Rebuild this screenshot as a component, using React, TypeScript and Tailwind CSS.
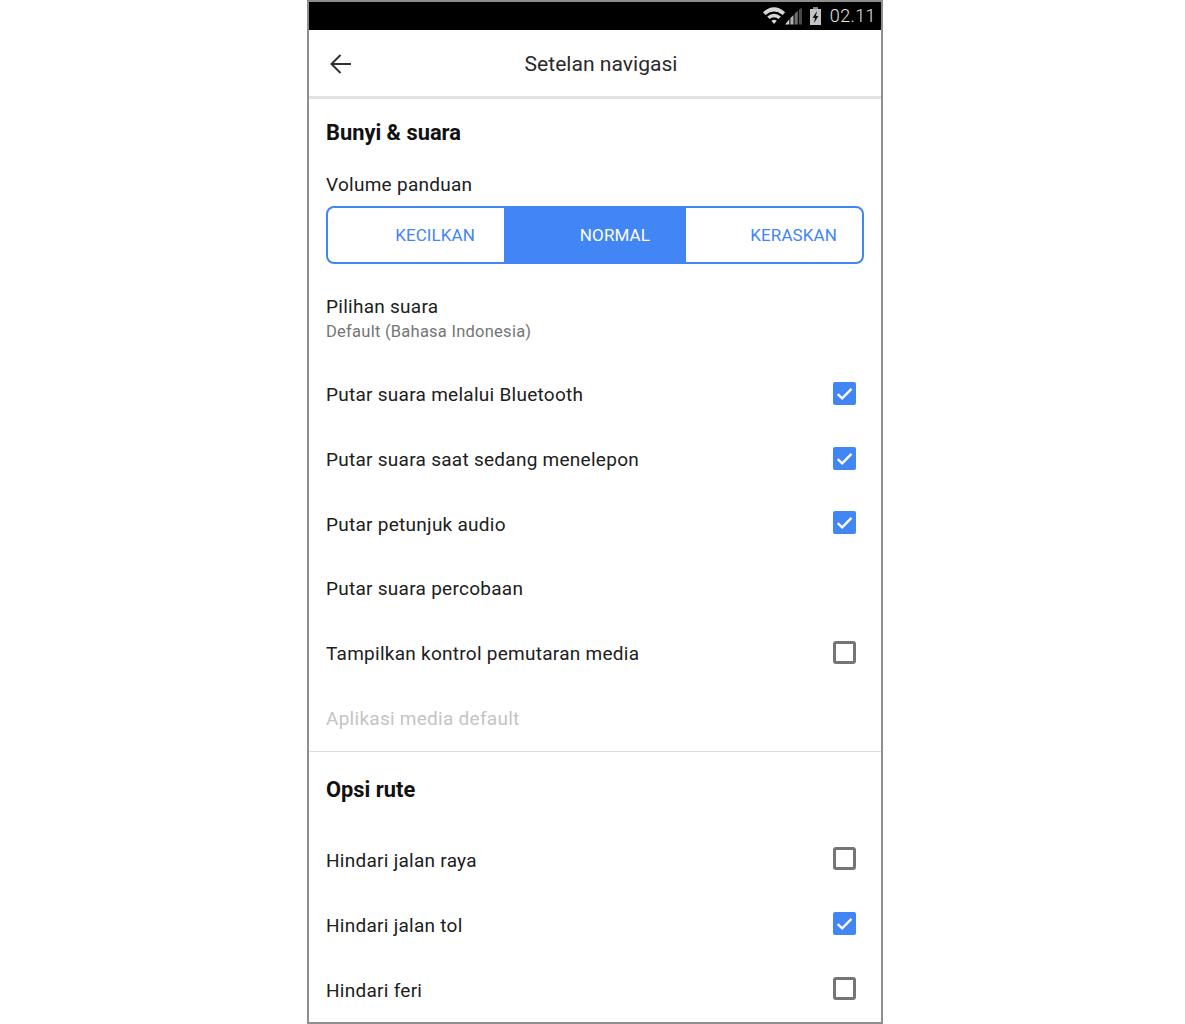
const font = { fontFamily: 'Roboto, "Liberation Sans", sans-serif' };

function Check({ on }: { on: boolean }) {
  if (on) {
    return (
      <div className="w-[23px] h-[23px] mb-[4px] rounded-[2px] bg-[#4285f4] flex items-center justify-center">
        <svg width="19" height="19" viewBox="0 0 18 18" fill="none">
          <path d="M2.6 9.6 L6.8 13.6 L15.6 4.6" stroke="#ffffff" strokeWidth="2.2" />
        </svg>
      </div>
    );
  }
  return <div className="w-[23px] h-[23px] mb-[4px] rounded-[3px] border-[3px] border-[#757575] bg-white" />;
}

function Row({ label, check, muted }: { label: string; check?: boolean; muted?: boolean }) {
  return (
    <div className="h-[65px] flex items-center justify-between pl-[17px] pr-[25px]">
      <span className={`text-[19px] leading-[24px] tracking-[0.27px] ${muted ? 'text-[#c4c4c4]' : 'text-[#202020]'}`}>{label}</span>
      {check !== undefined && <Check on={check} />}
    </div>
  );
}

export default function App() {
  return (
    <div className="w-[1185px] h-[1024px] bg-white flex justify-center overflow-hidden" style={font}>
      <div className="w-[576px] h-[1024px] ml-[5px] border-2 border-[#8e8e8e] flex flex-col overflow-hidden bg-white">
        <div className="h-[28px] bg-black flex items-center justify-end pr-[5px] shrink-0">
          <svg width="40" height="22" viewBox="0 0 38 20" className="mr-[6px]">
            <path d="M0 6.5 Q10.5 -3 21 6.5 L18.6 9 Q10.5 2.4 2.4 9 Z" fill="#d8d8d8" />
            <path d="M4 10.5 Q10.5 5.3 17 10.5 L14.8 12.8 Q10.5 9.6 6.2 12.8 Z" fill="#d8d8d8" />
            <path d="M8 14.5 Q10.5 12.6 13 14.5 L10.5 17.5 Z" fill="#d8d8d8" />
            <path d="M21 18 L25 18 L25 13 Z" fill="#d0d0d0" />
            <path d="M26 18 L29 18 L29 9 L26 12 Z" fill="#b0b0b0" />
            <path d="M30 18 L33 18 L33 5 L30 8 Z" fill="#707070" />
            <path d="M34 18 L37 18 L37 2 L34 4 Z" fill="#4a4a4a" />
          </svg>
          <svg width="13" height="20" viewBox="0 0 13 20" className="mr-[8px]">
            <rect x="4" y="1" width="5" height="2" fill="#8a8a8a" />
            <rect x="1" y="3" width="11" height="16" fill="#c4c4c4" />
            <path d="M8 5 L3.5 12 L6 12 L5 17 L9.5 10 L7 10 Z" fill="#111" />
          </svg>
          <span className="text-[18px] leading-[24px] tracking-[0.4px] font-light text-[#e4e4e4]">02.11</span>
        </div>

        <div className="h-[69px] shrink-0 relative flex items-center justify-center border-b-[3px] border-[#e2e2e2]">
          <svg width="22" height="22" viewBox="0 0 22 22" className="absolute left-[21px] top-[23px]" fill="none">
            <path d="M21 11 H2.5 M10.5 2 L1.5 11 L10.5 20" stroke="#303030" strokeWidth="2" />
          </svg>
          <span className="text-[21.1px] leading-[28px] text-[#2a2a2a] ml-[12px] mt-[1px]">Setelan navigasi</span>
        </div>

        <div className="px-[17px] pt-[21px]">
          <div className="text-[21.85px] leading-[26px] font-bold text-[#111]">Bunyi &amp; suara</div>
          <div className="mt-[27px] text-[19px] leading-[24px] tracking-[0.27px] text-[#202020]">Volume panduan</div>
          <div className="mt-[9px] w-[538px] h-[58px] border-2 border-[#4285f4] rounded-[8px] flex overflow-hidden text-[17px] tracking-[0.1px] text-[#4285f4]">
            <div className="w-[177px] border-r border-[#4285f4] flex items-center justify-end pr-[29px] pt-[1px]">KECILKAN</div>
            <div className="w-[181px] bg-[#4285f4] text-white flex items-center justify-end pr-[36px] pt-[1px]">NORMAL</div>
            <div className="flex-1 flex items-center justify-end pr-[25px] pt-[1px]">KERASKAN</div>
          </div>
          <div className="mt-[31px] text-[19px] leading-[24px] tracking-[0.27px] text-[#202020]">Pilihan suara</div>
          <div className="mt-[1px] text-[16.5px] leading-[24px] tracking-[0.25px] text-[#757575]">Default (Bahasa Indonesia)</div>
        </div>

        <div className="mt-[19px] h-[389px] flex flex-col border-b border-[#dcdcdc] shrink-0">
          <Row label="Putar suara melalui Bluetooth" check={true} />
          <Row label="Putar suara saat sedang menelepon" check={true} />
          <Row label="Putar petunjuk audio" check={true} />
          <Row label="Putar suara percobaan" />
          <Row label="Tampilkan kontrol pemutaran media" check={false} />
          <Row label="Aplikasi media default" muted />
        </div>

        <div className="pl-[17px] pt-[25px] text-[21.85px] leading-[26px] font-bold text-[#111]">Opsi rute</div>
        <div className="mt-[25px] flex flex-col">
          <Row label="Hindari jalan raya" check={false} />
          <Row label="Hindari jalan tol" check={true} />
          <Row label="Hindari feri" check={false} />
        </div>
      </div>
    </div>
  );
}
